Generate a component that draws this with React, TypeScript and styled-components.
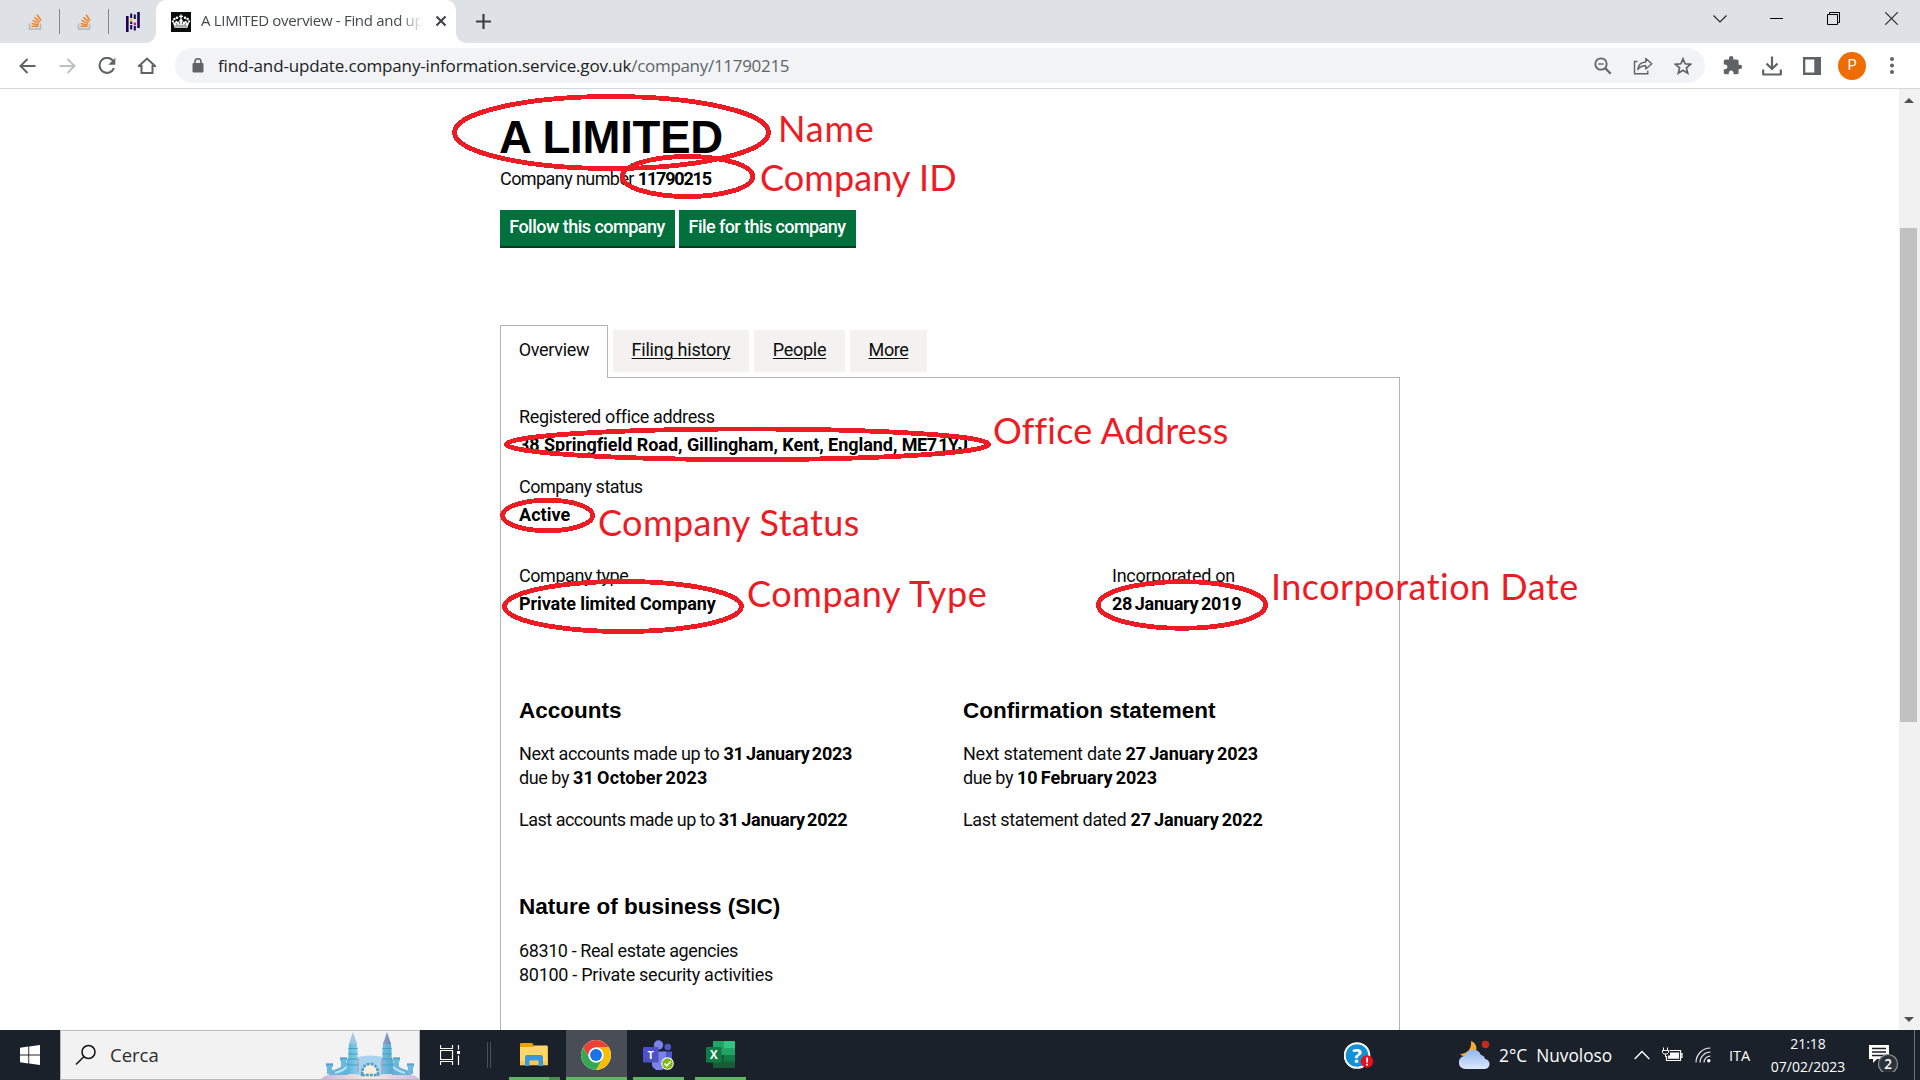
import React from "react";
import styled, { createGlobalStyle, css } from "styled-components";

const Global = createGlobalStyle`
  * { box-sizing: border-box; }
  html, body { margin: 0; padding: 0; overflow: hidden; background: #fff; }
`;

const UI_FONT = '"Open Sans", "Noto Sans", sans-serif';
const BODY_FONT = 'Roboto, "Liberation Sans", sans-serif';

const Screen = styled.div`
  position: relative;
  width: 1920px;
  height: 1080px;
  display: flex;
  flex-direction: column;
  overflow: hidden;
  background: #fff;
  svg { display: block; flex: none; }
`;

/* ---------- Browser chrome ---------- */
const TabStrip = styled.div`
  height: 43px;
  flex: none;
  display: flex;
  background: #dee1e6;
`;
const PinnedTab = styled.div<{ $w: number; $pad?: number; $divided?: boolean }>`
  width: ${(p) => p.$w}px;
  height: 43px;
  padding-left: ${(p) => p.$pad ?? 0}px;
  display: flex;
  align-items: center;
  justify-content: center;
  ${(p) =>
    p.$divided &&
    css`
      background: linear-gradient(#80868b, #80868b) right 9px / 1px 25px no-repeat;
    `}
`;
const ActiveTab = styled.div`
  position: relative;
  width: 300px;
  height: 43px;
  padding-left: 15px;
  display: flex;
  align-items: center;
  background: #fff;
  border-radius: 10px 10px 0 0;
  &::before, &::after {
    content: "";
    position: absolute;
    bottom: 0;
    width: 10px;
    height: 10px;
  }
  &::before { left: -10px; background: radial-gradient(circle at 0 0, transparent 9.5px, #fff 10px); }
  &::after { right: -10px; background: radial-gradient(circle at 100% 0, transparent 9.5px, #fff 10px); }
`;
const TabTitle = styled.div`
  width: 224px;
  margin-left: 10px;
  margin-top: -3px;
  font: 15px/20px ${UI_FONT};
  letter-spacing: -0.31px;
  color: #45494d;
  white-space: nowrap;
  mask-image: linear-gradient(90deg, #000 198px, transparent 222px);
`;
const TabClose = styled.div`
  margin-left: 10px;
  margin-top: -1px;
`;
const NewTab = styled.div`
  margin: 14px 0 0 20px;
`;
const WindowControls = styled.div`
  margin-left: auto;
  display: flex;
  height: 37px;
`;
const ControlCell = styled.div<{ $w?: number }>`
  width: ${(p) => p.$w ?? 57}px;
  display: flex;
  align-items: center;
  justify-content: center;
`;

const Toolbar = styled.div`
  height: 46px;
  flex: none;
  display: flex;
  align-items: center;
  padding: 0 9px 0 7px;
  border-bottom: 1px solid #d5d7da;
  background: #fff;
`;
const ToolCell = styled.div<{ $w?: number }>`
  width: ${(p) => p.$w ?? 40}px;
  display: flex;
  align-items: center;
  justify-content: center;
`;
const Omnibox = styled.div`
  width: 1530px;
  height: 35px;
  margin: 0 7px 0 8px;
  padding: 0 2px 0 15px;
  display: flex;
  align-items: center;
  border-radius: 18px;
  background: #f1f3f4;
`;
const Url = styled.div`
  flex: 1;
  margin-left: 13px;
  font: 17px/24px ${UI_FONT};
  letter-spacing: -0.15px;
  color: #202124;
  span { color: #5f6368; letter-spacing: -0.3px; }
`;
const Avatar = styled.div`
  width: 28px;
  height: 28px;
  border-radius: 50%;
  background: #ef6c00;
  color: #fff;
  font: 14.5px/28px Roboto, sans-serif;
  text-align: center;
`;

/* ---------- Page ---------- */
const Viewport = styled.div`
  height: 941px;
  flex: none;
  display: flex;
  overflow: hidden;
`;
const Main = styled.main`
  width: 1899px;
  padding: 24px 499px 0 500px;
  font: 18px/24px ${BODY_FONT};
  color: #0b0c0c;
`;
const Scrollbar = styled.div`
  width: 21px;
  display: flex;
  flex-direction: column;
  align-items: center;
  padding: 9px 2px 8px 0;
  background: #f1f1f1;
`;
const ScrollArrow = styled.div<{ $down?: boolean }>`
  border: 5px solid transparent;
  ${(p) => (p.$down ? "border-top-color: #505050; border-bottom: 0; margin-top: auto;" : "border-bottom-color: #505050; border-top: 0;")}
`;
const ScrollThumb = styled.div`
  width: 17px;
  height: 494px;
  margin-top: 125px;
  background: #c1c1c1;
`;
const T = styled.span<{ $ls?: number; $ws?: number; $b?: boolean }>`
  letter-spacing: ${(p) => p.$ls ?? 0}px;
  word-spacing: ${(p) => p.$ws ?? 0}px;
  font-weight: ${(p) => (p.$b ? 700 : 400)};
  white-space: pre;
  ${(p) => p.$b && "color: #000;"}
`;
const Title = styled.h1`
  margin: 0 0 4px -1px;
  font: 700 45.500px/50px "Liberation Sans", Arial, sans-serif;
  letter-spacing: -0.2px;
  color: #000;
`;
const CompanyNumber = styled.p`
  margin: 0 0 19px;
`;
const Actions = styled.div`
  display: flex;
  gap: 4px;
  margin-bottom: 77px;
`;
const ActionButton = styled.div<{ $w: number; $ls: number }>`
  width: ${(p) => p.$w}px;
  height: 38px;
  padding: 5px 1px 0 0;
  text-align: center;
  background: #00703c;
  border-bottom: 2px solid #003a1f;
  color: #fff;
  font-weight: 500;
  letter-spacing: ${(p) => p.$ls}px;
  white-space: nowrap;
`;
const TabBar = styled.div`
  height: 52px;
  display: flex;
  gap: 5px;
  align-items: flex-start;
`;
const PageTab = styled.div<{ $w: number; $active?: boolean }>`
  width: ${(p) => p.$w}px;
  text-align: center;
  ${(p) =>
    p.$active
      ? css`
          height: 53px;
          padding-top: 12px;
          border: 1px solid #b1b4b6;
          border-bottom: 0;
          background: #fff;
          z-index: 1;
        `
      : css`
          height: 42px;
          margin-top: 5px;
          padding-top: 8px;
          background: #f3f2f1;
          text-decoration: underline;
          text-underline-offset: 2px;
          text-decoration-thickness: 1px;
        `}
`;
const Panel = styled.section`
  height: 700px;
  padding: 27px 19px 0 18px;
  border: 1px solid #b1b4b6;
`;
const Fields = styled.div`
  display: grid;
  grid-template-columns: 593px 1fr;
`;
const Field = styled.dl<{ $gap: number }>`
  margin: 0 0 ${(p) => p.$gap}px;
  dt { height: 24px; margin-bottom: 4px; }
  dd { height: 24px; margin: 0; }
`;
const Columns = styled.div`
  display: grid;
  grid-template-columns: 444px 1fr;
`;
const Heading = styled.h2<{ $gap?: number }>`
  margin: 0 0 ${(p) => p.$gap ?? 19}px;
  font: 700 22.5px/25px "Liberation Sans", Arial, sans-serif;
  color: #000;
`;
const Para = styled.p<{ $gap?: number }>`
  margin: 0 0 ${(p) => p.$gap ?? 0}px;
`;

/* ---------- Annotations drawn over the page ---------- */
const Rings = styled.svg`
  position: absolute;
  left: 0;
  top: 0;
  pointer-events: none;
`;
const Note = styled.div<{ $x: number; $base: number; $ls: number }>`
  position: absolute;
  left: ${(p) => p.$x}px;
  top: ${(p) => p.$base - 35}px;
  font: 36px/44px Lato, sans-serif;
  letter-spacing: ${(p) => p.$ls}px;
  color: #ed1c24;
  white-space: nowrap;
`;

/* ---------- Taskbar ---------- */
const Taskbar = styled.div`
  height: 50px;
  flex: none;
  display: flex;
  background: #1a212b;
  color: #fff;
  font-family: ${UI_FONT};
`;
const TaskCell = styled.div<{ $w: number; $ml?: number; $line?: string; $active?: boolean }>`
  width: ${(p) => p.$w}px;
  height: 50px;
  margin-left: ${(p) => p.$ml ?? 0}px;
  padding-right: ${(p) => (p.$line ? 1 : 0)}px;
  flex: none;
  display: flex;
  align-items: center;
  justify-content: center;
  background-color: ${(p) => (p.$active ? "#484d56" : "transparent")};
  ${(p) =>
    p.$line &&
    css`
      background-image: ${p.$line};
      background-size: 100% 3px;
      background-position: bottom;
      background-repeat: no-repeat;
    `}
`;
const SearchBox = styled.div`
  width: 360px;
  height: 50px;
  display: flex;
  align-items: center;
  padding-left: 14px;
  border: 1px solid #b9b9b9;
  background: #f2f2f2;
  color: #2b2b2b;
  font-size: 18.5px;
  span { margin: -2px auto 0 13px; }
`;
const Divider = styled.div`
  width: 4px;
  height: 26px;
  margin: 12px 0 0 7px;
  border: solid #4a505a;
  border-width: 0 1px;
`;
const Tray = styled.div<{ $ml?: number; $size?: number; $w?: number }>`
  margin-left: ${(p) => p.$ml ?? 0}px;
  width: ${(p) => (p.$w ? p.$w + "px" : "auto")};
  height: 50px;
  flex: none;
  display: flex;
  align-items: center;
  font-size: ${(p) => p.$size ?? 17}px;
  white-space: pre;
`;
const Clock = styled.div`
  width: 90px;
  margin-left: 12px;
  padding-top: 2px;
  font-size: 14px;
  line-height: 23px;
  text-align: center;
`;
const ShowDesktop = styled.div`
  width: 6px;
  height: 50px;
  margin-left: auto;
  border-left: 1px solid #6d737b;
`;

const G = "#5f6368";

const StackOverflowIcon = () => (
  <svg width="16" height="18" viewBox="0 0 16 18" fill="none">
    <path d="M1.5 10.5v5.5h11v-5.5" stroke="#b4b8bc" strokeWidth="1.5" />
    <g stroke="#f48024" strokeWidth="1.5">
      <path d="M3.5 13.3h7" />
      <path d="M3.7 10.6l6.9 1.3" />
      <path d="M4.6 7.4l6.4 3" />
      <path d="M6.4 4.3l5.5 4.5" />
      <path d="M9 1.8l4.2 5.7" />
    </g>
  </svg>
);
const PandasIcon = () => (
  <svg width="14" height="20" viewBox="0 0 14 20">
    <g fill="#150458">
      <path d="M0 4h2.600v16H0zM11.200 0h2.600v16h-2.600z" />
      <path d="M4.200 1.500h2v4.500h-2zM4.200 13h2v4.500h-2zM7.800 2.500h2V7h-2zM7.800 14h2v4.500h-2z" />
      <path d="M4.200 9.500h2v2.500h-2z" />
    </g>
    <path d="M4.200 6.600h2v2.500h-2z" fill="#ffca00" />
    <path d="M7.600 10.600h2.400v2.600H7.600z" fill="#e70488" />
  </svg>
);
const CrownIcon = () => (
  <svg width="20" height="20" viewBox="0 0 20 20">
    <rect width="20" height="20" fill="#0b0c0c" />
    <g fill="#fff">
      <path d="M9.300 2.500h1.400v1.300H12V5h-1.300v1.500H9.300V5H8V3.800h1.300z" />
      <circle cx="6" cy="5.800" r="1.300" /><circle cx="14" cy="5.800" r="1.300" />
      <circle cx="3.400" cy="7" r="1.200" /><circle cx="16.600" cy="7" r="1.200" />
      <circle cx="1.900" cy="9.300" r="1.100" /><circle cx="18.100" cy="9.300" r="1.100" />
      <path d="M1.800 10l2.200.8 1-2.300 2.200 1.800L10 6l2.800 4.300L15 8.500l1 2.300 2.200-.8-1.800 5.800H3.600z" />
    </g>
    <path d="M5 11l1.300 2M8.600 9.500v3M11.400 9.500v3M15 11l-1.300 2M4 14h12" stroke="#0b0c0c" strokeWidth=".7" />
  </svg>
);

const Castle = () => (
  <svg width="98" height="48" viewBox="0 0 98 48">
    <defs>
      <linearGradient id="tw" x1="0" x2="1" y1="0" y2="0">
        <stop offset="0" stopColor="#58b4d8" /><stop offset=".4" stopColor="#a6e6f5" /><stop offset="1" stopColor="#55a8cf" />
      </linearGradient>
      <linearGradient id="sp" x1="0" x2="1" y1="0" y2="0">
        <stop offset="0" stopColor="#9cc6e4" /><stop offset=".5" stopColor="#a9d3ea" /><stop offset="1" stopColor="#7686b6" />
      </linearGradient>
      <linearGradient id="gr" x1="0" x2="1" y1="0" y2="0">
        <stop offset="0" stopColor="#c9b7dd" /><stop offset=".5" stopColor="#fae8dc" /><stop offset="1" stopColor="#cdb9e2" />
      </linearGradient>
    </defs>
    <path d="M0 48q4-5 16-5h66q12 0 16 5z" fill="url(#gr)" />
    <path d="M36 26q14-3 26 0v18H36z" fill="#a9d2ee" />
    <path d="M8 40q12-2 19-10v14H8zM90 40q-12-2-19-10v14h19z" fill="#6bb2d8" />
    <path d="M14 42q8-2 13-7M84 42q-8-2-13-7" stroke="#b7e3f2" strokeWidth="2" fill="none" />
    <path d="M41 44q0-11 8-11t8 11z" fill="#fbeedd" stroke="#4e9fc8" strokeWidth="2.5" strokeDasharray="3 1" />
    <path d="M27.500 18l.8-7h7.400l.8 7v8l1.500 3v14H26V29l1.500-3zM61.500 18l.8-7h7.400l.8 7v8l1.500 3v14H60V29l1.500-3z" fill="url(#tw)" />
    <path d="M32 1l4 12h-8zM66 1l4 12h-8z" fill="url(#sp)" />
    <path d="M27.500 17.500h9M27 23h10M27 28h10M26 34h12M61.500 17.500h9M61 23h10M61 28h10M60 34h12" stroke="#479fc8" strokeWidth="1" />
    <path d="M36.800 28v14M61.200 28v14" stroke="#c995bf" strokeWidth="1.200" />
    <g fill="#69b9dc">
      <path d="M5 33h7v3H5zM6 36h5v7H6zM19 27h7v3h-7zM20 30h5v6h-5zM86 33h7v3h-7zM87 36h5v7h-5zM72 27h7v3h-7zM73 30h5v6h-5z" />
    </g>
    <path d="M5 33h7M19 27h7M86 33h7M72 27h7" stroke="#3b83b0" strokeWidth="1.2" />
  </svg>
);

const ChromeIcon = () => (
  <svg width="30" height="30" viewBox="0 0 48 48">
    <circle cx="24" cy="24" r="24" fill="#fff" />
    <path d="M3.220 12A24 24 0 0 1 44.780 12H24A12 12 0 0 0 13.610 30z" fill="#ea4335" />
    <path d="M44.780 12A24 24 0 0 1 24 48L34.390 30A12 12 0 0 0 24 12z" fill="#fbbc04" />
    <path d="M24 48A24 24 0 0 1 3.220 12L13.610 30A12 12 0 0 0 34.390 30z" fill="#34a853" />
    <circle cx="24" cy="24" r="12" fill="#fff" />
    <circle cx="24" cy="24" r="9.5" fill="#1a73e8" />
  </svg>
);

const GREEN = "linear-gradient(#5fb661, #5fb661)";

const rings = [
  [611.5, 132.5, 157, 36],
  [687.5, 176.5, 65.3, 20],
  [747.5, 444.3, 241, 15.3],
  [547.6, 515.5, 45, 15.3],
  [623, 606.5, 118.5, 25],
  [1182, 605, 83.7, 23.3],
];
const notes: [string, number, number, number][] = [
  ["Name", 778, 141, 0.8],
  ["Company ID", 760, 190, 0.1],
  ["Company Status", 598, 535, 0.4],
  ["Company Type", 747, 606, 0.6],
  ["Office Address", 993, 443, 0.15],
  ["Incorporation Date", 1271, 599, 0.48],
];

export default function App() {
  return (
    <Screen>
      <Global />
      <TabStrip>
        <PinnedTab $w={60} $pad={11} $divided><StackOverflowIcon /></PinnedTab>
        <PinnedTab $w={49} $divided><StackOverflowIcon /></PinnedTab>
        <PinnedTab $w={47}><PandasIcon /></PinnedTab>
        <ActiveTab>
          <CrownIcon />
          <TabTitle>A LIMITED overview - Find and up</TabTitle>
          <TabClose>
            <svg width="12" height="12" viewBox="0 0 12 12"><path d="M1.500 1.500l9 9M10.500 1.500l-9 9" stroke="#3c4043" strokeWidth="2" /></svg>
          </TabClose>
        </ActiveTab>
        <NewTab>
          <svg width="15" height="15" viewBox="0 0 15 15"><path d="M7.500 0v15M0 7.500h15" stroke="#3c4043" strokeWidth="2.200" /></svg>
        </NewTab>
        <WindowControls>
          <ControlCell>
            <svg width="14" height="8" viewBox="0 0 14 8"><path d="M.5.5L7 7 13.500.5" fill="none" stroke="#222" strokeWidth="1.100" /></svg>
          </ControlCell>
          <ControlCell>
            <svg width="13" height="1"><rect width="13" height="1" fill="#000" /></svg>
          </ControlCell>
          <ControlCell>
            <svg width="13" height="13" viewBox="0 0 13 13"><path d="M.5 2.500h10v10H.5zM2.500 2.500v-2h10v10h-2" fill="none" stroke="#000" /></svg>
          </ControlCell>
          <ControlCell $w={58}>
            <svg width="13" height="13" viewBox="0 0 13 13"><path d="M.3.3l12.400 12.400M12.700.3L.3 12.700" stroke="#222" strokeWidth="1.100" /></svg>
          </ControlCell>
        </WindowControls>
      </TabStrip>

      <Toolbar>
        <ToolCell>
          <svg width="17" height="16" viewBox="0 0 17 16"><path d="M16.500 8H2M8.500 1L1.500 8l7 7" fill="none" stroke={G} strokeWidth="2" /></svg>
        </ToolCell>
        <ToolCell>
          <svg width="17" height="16" viewBox="0 0 17 16"><path d="M.5 8H15M8.500 1l7 7-7 7" fill="none" stroke="#bdc1c6" strokeWidth="2" /></svg>
        </ToolCell>
        <ToolCell>
          <svg width="18" height="18" viewBox="0 0 18 18">
            <path d="M15.200 4A7.500 7.500 0 1 0 16 11.200" fill="none" stroke={G} strokeWidth="2.100" />
            <path d="M17.300.8v7h-7z" fill={G} />
          </svg>
        </ToolCell>
        <ToolCell>
          <svg width="18" height="18" viewBox="0 0 18 18"><path d="M1 9L9 1.600 17 9h-2.500v7h-11V9z" fill="none" stroke={G} strokeWidth="2" /></svg>
        </ToolCell>
        <Omnibox>
          <ToolCell $w={15}>
            <svg width="12" height="15" viewBox="0 0 12 15">
              <rect x=".5" y="5" width="11" height="9.500" rx="1" fill={G} />
              <path d="M3 6V3.800a3 3 0 0 1 6 0V6" fill="none" stroke={G} strokeWidth="1.600" />
            </svg>
          </ToolCell>
          <Url>find-and-update.company-information.service.gov.uk<span>/company/11790215</span></Url>
          <ToolCell>
            <svg width="18" height="18" viewBox="0 0 18 18" fill="none" stroke={G}>
              <circle cx="7" cy="7" r="5.700" strokeWidth="1.800" /><path d="M11.300 11.300l5.400 5.400" strokeWidth="2.200" /><path d="M4.300 7h5.400" strokeWidth="1.400" />
            </svg>
          </ToolCell>
          <ToolCell>
            <svg width="20" height="18" viewBox="0 0 20 18" fill="none" stroke={G} strokeWidth="1.400">
              <path d="M4.500 4.500H1.500v12.300h13.300v-3" /><path d="M4.800 12.500c.5-5 3.500-7.300 8-7.500V1.500l6 5.300-6 5.200V8.700c-3.500 0-6 .9-8 3.800z" strokeLinejoin="round" />
            </svg>
          </ToolCell>
          <ToolCell>
            <svg width="18" height="18" viewBox="0 0 18 18"><path d="M9 1.800l2.100 5 5.400.5-4.100 3.500 1.300 5.300L9 13.200l-4.700 2.900 1.300-5.300L1.500 7.300l5.400-.5z" fill="none" stroke={G} strokeWidth="1.700" /></svg>
          </ToolCell>
        </Omnibox>
        <ToolCell>
          <svg width="21" height="21" viewBox="0 0 24 24"><path fill={G} d="M20.500 11H19V7c0-1.100-.9-2-2-2h-4V3.500a2.500 2.500 0 0 0-5 0V5H4c-1.100 0-2 .9-2 2v3.800h1.500c1.500 0 2.700 1.200 2.700 2.700S5 16.200 3.500 16.200H2V20c0 1.100.9 2 2 2h3.800v-1.500c0-1.500 1.200-2.700 2.700-2.700s2.700 1.200 2.700 2.700V22H17c1.100 0 2-.9 2-2v-4h1.500a2.500 2.500 0 0 0 0-5z" /></svg>
        </ToolCell>
        <ToolCell>
          <svg width="20" height="20" viewBox="0 0 20 20" fill="none" stroke={G} strokeWidth="2.200"><path d="M10 .5v12M4.500 7.500L10 13l5.500-5.500M1.200 13.500v5h17.600v-5" strokeLinejoin="round" /></svg>
        </ToolCell>
        <ToolCell>
          <svg width="18" height="18" viewBox="0 0 18 18"><path fill={G} d="M0 0h18v18H0zM2.300 2.600v12.800h9V2.600z" fillRule="evenodd" /></svg>
        </ToolCell>
        <ToolCell><Avatar>P</Avatar></ToolCell>
        <ToolCell $w={39}>
          <svg width="4" height="17" viewBox="0 0 4 17" fill={G}><circle cx="2" cy="2" r="2" /><circle cx="2" cy="8.500" r="2" /><circle cx="2" cy="15" r="2" /></svg>
        </ToolCell>
      </Toolbar>

      <Viewport>
        <Main>
          <Title>A LIMITED</Title>
          <CompanyNumber><T $ls={-0.58}>Company number </T><T $b $ls={-1.2}>11790215</T></CompanyNumber>
          <Actions>
            <ActionButton $w={175} $ls={-0.52}>Follow this company</ActionButton>
            <ActionButton $w={177} $ls={-0.57}>File for this company</ActionButton>
          </Actions>
          <TabBar>
            <PageTab $w={108} $active><T $ls={-0.3}>Overview</T></PageTab>
            <PageTab $w={136}><T $ls={-0.22}>Filing history</T></PageTab>
            <PageTab $w={91}><T $ls={-0.3}>People</T></PageTab>
            <PageTab $w={77}><T $ls={-0.4}>More</T></PageTab>
          </TabBar>
          <Panel>
            <Field $gap={18}>
              <dt><T $ls={-0.36}>Registered office address</T></dt>
              <dd>
                <T $b $ls={-0.04}>38 Springfield Road, Gillingham, Kent, England, </T>
                <T $b $ls={-0.45} $ws={-2.5}>ME7 1YJ</T>
              </dd>
            </Field>
            <Field $gap={37}>
              <dt><T $ls={-0.5}>Company status</T></dt>
              <dd><T $b $ls={0.05}>Active</T></dd>
            </Field>
            <Fields>
              <Field $gap={82}>
                <dt><T $ls={-0.45}>Company type</T></dt>
                <dd><T $b $ls={-0.08}>Private limited Company</T></dd>
              </Field>
              <Field $gap={82}>
                <dt><T $ls={-0.25}>Incorporated on</T></dt>
                <dd><T $b $ls={-0.23} $ws={-1.7}>28 January 2019</T></dd>
              </Field>
            </Fields>
            <Columns>
              <div>
                <Heading>Accounts</Heading>
                <Para><T $ls={-0.41}>Next accounts made up to </T><T $b $ls={-0.25} $ws={-1.9}>31 January 2023</T></Para>
                <Para $gap={18}><T $ls={-0.44}>due by </T><T $b $ls={0.15} $ws={-1.5}>31 October 2023</T></Para>
                <Para $gap={62}><T $ls={-0.5}>Last accounts made up to </T><T $b $ls={-0.25} $ws={-1.9}>31 January 2022</T></Para>
              </div>
              <div>
                <Heading>Confirmation statement</Heading>
                <Para><T $ls={-0.25}>Next statement date </T><T $b $ls={-0.08} $ws={-1.3}>27 January 2023</T></Para>
                <Para $gap={18}><T $ls={-0.44}>due by </T><T $b $ls={0} $ws={-1.3}>10 February 2023</T></Para>
                <Para $gap={62}><T $ls={-0.37}>Last statement dated </T><T $b $ls={-0.08} $ws={-1.3}>27 January 2022</T></Para>
              </div>
            </Columns>
            <Heading $gap={20}>Nature of business (SIC)</Heading>
            <Para><T $ls={-0.4}>68310 - Real estate agencies</T></Para>
            <Para><T $ls={-0.28}>80100 - Private security activities</T></Para>
          </Panel>
        </Main>
        <Scrollbar>
          <ScrollArrow />
          <ScrollThumb />
          <ScrollArrow $down />
        </Scrollbar>
      </Viewport>

      <Taskbar>
        <TaskCell $w={60}>
          <svg width="20" height="20" viewBox="0 0 20 20" fill="#fff"><path d="M0 2.800l8.300-1.200v7.900H0zM9.200 1.400L20 0v9.500H9.200zM0 10.400h8.300v8L0 17.200zM9.200 10.400H20V20L9.200 18.500z" /></svg>
        </TaskCell>
        <SearchBox>
          <svg width="22" height="22" viewBox="0 0 22 22" fill="none" stroke="#111" strokeWidth="1.500"><circle cx="13.500" cy="8" r="6.500" /><path d="M8.800 12.700L1 20.500" /></svg>
          <span>Cerca</span>
          <Castle />
        </SearchBox>
        <TaskCell $w={60}>
          <svg width="20" height="20" viewBox="0 0 20 20" fill="none" stroke="#fff">
            <path d="M.5 0v3.500h12V0M.5 20v-3.500h12V20M.5 5.500h12v9H.5zM18.500 0v4.500M18.500 10.500V20" strokeWidth="1.200" /><path d="M17 6h3v3h-3z" fill="#fff" stroke="none" />
          </svg>
        </TaskCell>
        <Divider />
        <TaskCell $w={51} $ml={18} $line="linear-gradient(90deg, #5fb661 40px, #4a8a50 40px)">
          <svg width="28" height="24" viewBox="0 0 28 24">
            <path d="M0 1q0-1 1-1h10.500q1 0 1.500 1l1 2.500H28V22H0z" fill="#e8a200" />
            <path d="M0 4h13l1-1.500h13.500V22H0z" fill="#ffd668" />
            <path d="M0 18h28v4.500H0z" fill="#f5c140" opacity=".6" />
            <path d="M5 23V14q0-2 2-2h14q2 0 2 2v9h-4.500v-5.500h-9V23z" fill="#3b97dc" />
          </svg>
        </TaskCell>
        <TaskCell $w={61} $ml={6} $active $line={GREEN}><ChromeIcon /></TaskCell>
        <TaskCell $w={51} $ml={6} $line={GREEN}>
          <svg width="31" height="30" viewBox="0 0 31 30">
            <circle cx="24.800" cy="7" r="3.300" fill="#5059c9" /><path d="M20 11.500h9v9a5 5 0 0 1-9 3z" fill="#5059c9" />
            <circle cx="15.500" cy="5" r="4.700" fill="#7b83eb" /><path d="M9 11.500h14v9a7 7 0 0 1-14 5z" fill="#7b83eb" />
            <rect x="0" y="7" width="15.500" height="15.500" rx="1.300" fill="#4b53bc" />
            <text x="7.800" y="18.700" fill="#fff" fontSize="11" fontWeight="700" fontFamily="Open Sans" textAnchor="middle">T</text>
            <circle cx="24.500" cy="23.500" r="6.300" fill="#fff" /><circle cx="24.500" cy="23.500" r="5.300" fill="#7cb80e" />
            <path d="M21.500 23.500l2.200 2.300 4-4.300" fill="none" stroke="#fff" strokeWidth="1.600" />
          </svg>
        </TaskCell>
        <TaskCell $w={51} $ml={11} $line={GREEN}>
          <svg width="29" height="28" viewBox="0 0 29 28">
            <path d="M7 1q0-1 1-1h10v14H7z" fill="#21a366" /><path d="M18 0h10q1 0 1 1v6H18z" fill="#33c481" />
            <path d="M18 7h11v7H18z" fill="#21a366" /><path d="M7 14h11v7H7z" fill="#185c37" /><path d="M18 14h11v7H18z" fill="#107c41" />
            <path d="M7 20.500h22V26q0 1-1 1H8q-1 0-1-1z" fill="#185c37" />
            <rect x="0" y="6" width="15.500" height="15.500" rx="1.200" fill="#107c41" />
            <text x="7.800" y="17.900" fill="#fff" fontSize="11.500" fontWeight="700" fontFamily="Open Sans" textAnchor="middle">X</text>
          </svg>
        </TaskCell>
        <Tray $ml={598} $w={30}>
          <svg width="30" height="30" viewBox="0 0 30 30">
            <circle cx="13" cy="15.500" r="13.300" fill="#fff" /><circle cx="13" cy="15.500" r="11.300" fill="#1490d4" />
            <text x="13" y="22.500" fill="#fff" fontSize="20" fontWeight="700" fontFamily="Open Sans" textAnchor="middle">?</text>
            <circle cx="23" cy="21.500" r="6.200" fill="#e8101c" /><path d="M22.200 17.500h1.800v5h-1.800zM22.200 23.700h1.800v1.800h-1.800z" fill="#fff" />
          </svg>
        </Tray>
        <Tray $ml={85} $w={40}>
          <svg width="31" height="30" viewBox="0 0 31 30">
            <defs><linearGradient id="cl" x1="0" x2="0" y1="0" y2="1"><stop offset="0" stopColor="#8fb6f2" /><stop offset="1" stopColor="#dce9fb" /></linearGradient></defs>
            <path d="M12 1c6 2 7 9 3 13-4 4-10 4-14 0 7 0 12-5 11-13z" fill="#f9ab2d" />
            <circle cx="26.500" cy="4.500" r="3.700" fill="#c62b20" />
            <path d="M6.500 29a6.500 6.500 0 0 1-.5-13 8.500 8.500 0 0 1 16-1 5 5 0 0 1 4 4 5 5 0 0 1-1 10z" fill="url(#cl)" />
          </svg>
        </Tray>
        <Tray $w={135} $size={17.300}>{"2°C  Nuvoloso"}</Tray>
        <Tray $w={28}>
          <svg width="16" height="10" viewBox="0 0 16 10"><path d="M.7 9L8 1.500 15.300 9" fill="none" stroke="#fff" strokeWidth="1.400" /></svg>
        </Tray>
        <Tray $w={33}>
          <svg width="21" height="16" viewBox="0 0 21 16" fill="none" stroke="#fff">
            <path d="M7.500 3.500h11v10h-14V9M18.500 6.500h1.500v4h-1.500" strokeWidth="1.200" /><path d="M8 5.500h9v6.200H6V8.500h2z" fill="#fff" stroke="none" />
            <path d="M1.500.5v3M5.500.5v3M.5 3.500h6v2l-1.500 1.500H2L.5 5.500zM3.500 7v3" />
          </svg>
        </Tray>
        <Tray $w={34}>
          <svg width="16" height="16" viewBox="0 0 16 16" fill="none" stroke="#e8e8e8" strokeWidth="1.200">
            <path d="M1 15.500A14.500 14.500 0 0 1 15.500 1M5 15.500A10.500 10.500 0 0 1 15.500 5M9 15.500A6.500 6.500 0 0 1 15.500 9" /><circle cx="13.800" cy="13.800" r="1.700" fill="#fff" stroke="none" />
          </svg>
        </Tray>
        <Tray $w={22} $size={14.500}>ITA</Tray>
        <Clock><div>21:18</div><div>07/02/2023</div></Clock>
        <Tray $ml={16} $w={32}>
          <svg width="32" height="34" viewBox="0 0 32 34">
            <path d="M0 7h20v14H8l-4 4v-4H0z" fill="#fff" />
            <path d="M3 10.500h14M3 14h14M3 17.500h14" stroke="#1a212b" strokeWidth="1.300" />
            <circle cx="19" cy="26" r="9.500" fill="#2c323b" stroke="#8d9196" strokeWidth="1.200" />
            <text x="19" y="30.800" fill="#fff" fontSize="13.500" fontWeight="600" fontFamily="Open Sans" textAnchor="middle">2</text>
          </svg>
        </Tray>
        <ShowDesktop />
      </Taskbar>

      <Rings width="1920" height="1030" fill="none" stroke="#ed1c24" strokeWidth="4.800" shapeRendering="crispEdges">
        {rings.map(([cx, cy, rx, ry]) => (
          <ellipse key={cx} cx={cx} cy={cy} rx={rx} ry={ry} />
        ))}
      </Rings>
      {notes.map(([text, x, base, ls]) => (
        <Note key={text} $x={x} $base={base} $ls={ls}>{text}</Note>
      ))}
    </Screen>
  );
}
